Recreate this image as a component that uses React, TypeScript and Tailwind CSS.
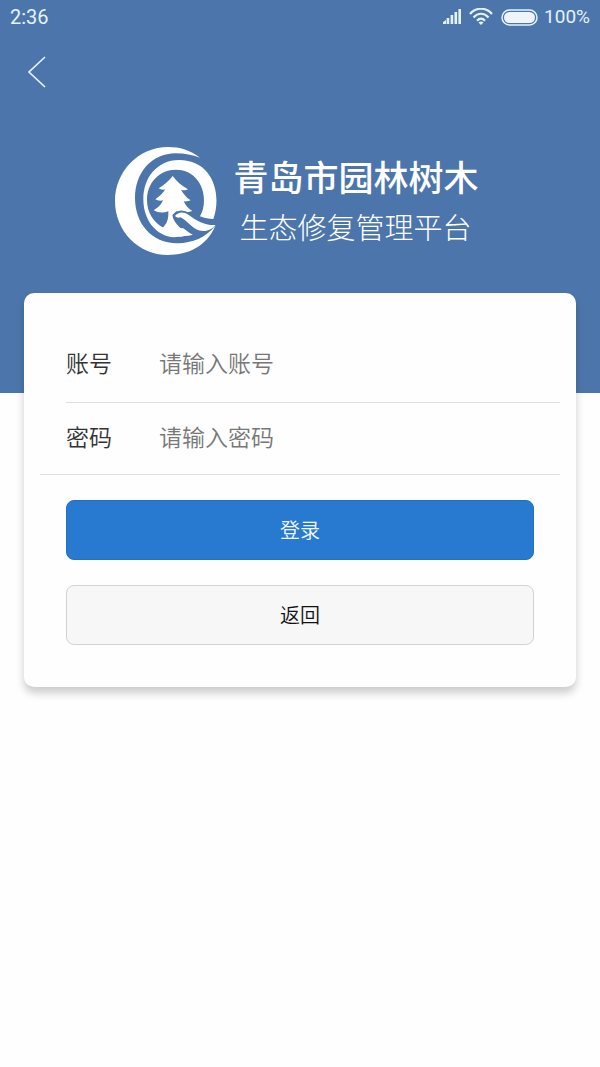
import { useState } from "react";

function SignalIcon() {
  return (
    <svg viewBox="0 0 18 16" className="h-4 w-[18px] fill-[#e4f2fb]" aria-hidden="true">
      <path d="M0 15v-2l3-2v4z" />
      <rect x="3.600" y="9" width="2.600" height="6" />
      <rect x="7.600" y="6" width="2.600" height="9" />
      <rect x="11.500" y="3" width="2.600" height="12" />
      <rect x="15.400" y="0" width="2.600" height="15" />
    </svg>
  );
}

function WifiIcon() {
  return (
    <svg viewBox="0 0 24 18" className="h-[18px] w-6 fill-none stroke-[#e4f2fb] stroke-[2.2]" aria-hidden="true">
      <path d="M1 6C7-1 17-1 23 6" />
      <path d="M4.500 9.500C9 4.500 15 4.500 19.500 9.500" />
      <path d="M8 12.700C10.500 10 13.500 10 16 12.700" />
      <path d="M9.500 14.500Q12 12.500 14.500 14.500L12 17z" className="fill-[#e4f2fb] stroke-none" />
    </svg>
  );
}

function BatteryIcon() {
  return (
    <svg viewBox="0 0 37 17" className="h-[17px] w-[37px]" aria-hidden="true">
      <rect x="1" y="1" width="35" height="15" rx="7.500" className="fill-none stroke-[#e4f2fb] stroke-[1.5]" />
      <rect x="3" y="3" width="31" height="11" rx="5.500" className="fill-[#eef4f9]" />
    </svg>
  );
}

function Logo() {
  return (
    <svg viewBox="30 33 306 330" className="h-[110px] w-[102px] shrink-0 fill-white" role="img" aria-label="青岛市园林树木">
      <path d="M285 68C255 45 225 36 190 36C100 36 30 110 30 198C30 288 100 360 188 360C250 360 304 335 332 271C302 309 262 324 218 325C140 326 90 265 90 190C90 112 140 56 212 55C240 55 262 60 285 68Z" />
      <path d="M325 252C352 175 322 75 222 75C155 75 115 130 115 192C115 255 153 304 208 307L262 300L235 280L175 278C145 262 126 232 126 195C126 143 163 104 213 104C262 104 297 144 297 195C297 215 293 230 285 244C299 250 311 252 325 252Z" />
      <path d="M203 123C192 137 177 150 161 160Q170 166 181 163C174 175 163 185 151 193Q162 200 174 196C168 210 158 219 146 226Q166 238 190 229C191 248 188 266 172 279C188 292 207 302 225 305L264 299C236 290 206 268 202 240L214 229Q240 235 262 228C250 221 241 211 236 199Q249 200 257 196C244 188 235 176 228 164Q240 168 249 163C231 153 214 139 203 123Z" />
      <path d="M210 243C220 230 235 229 250 239C272 256 290 267 316 268L298 288C264 290 249 258 224 248C219 246 214 246 210 243Z" className="stroke-[#4c76ab] stroke-[12] [stroke-linejoin:round]" />
      <path d="M210 243C220 230 235 229 250 239C274 257 297 271 331 270C323 281 309 289 294 288C264 288 249 257 226 247C220 249 215 248 210 243Z" />
    </svg>
  );
}

export default function App() {
  const [account, setAccount] = useState("");
  const [password, setPassword] = useState("");

  return (
    <div className="min-h-screen bg-[#fefefe] font-['Noto_Sans_CJK_SC',sans-serif] text-[#333]">
      <header className="h-[393px] bg-[#4c76ab]">
        <div className="flex h-[34px] items-center justify-between px-2.5 font-[Roboto,sans-serif] text-[20px] text-[#e4f2fb]">
          <span>2:36</span>
          <div className="flex items-center gap-2">
            <SignalIcon />
            <WifiIcon />
            <BatteryIcon />
            <span className="-ml-0.5 text-[19px]">100%</span>
          </div>
        </div>
        <button type="button" aria-label="返回上一页" className="flex h-[76px] w-[74px] items-center justify-center">
          <svg viewBox="0 0 18 32" className="h-8 w-[18px] fill-none stroke-[#e4f2fb] stroke-[1.7]" aria-hidden="true">
            <path d="M17 1L1 16L17 31" />
          </svg>
        </button>
        <div className="mt-9 flex items-center justify-center gap-4 pr-1.5">
          <Logo />
          <h1 className="text-white">
            <span className="block text-[35px] leading-[50px] font-medium">青岛市园林树木</span>
            <span className="block pl-1.5 text-[29px] leading-[50px] font-light">生态修复管理平台</span>
          </h1>
        </div>
      </header>

      <main className="px-6">
        <form
          onSubmit={(event) => event.preventDefault()}
          className="-mt-[100px] rounded-[10px] bg-[#fefefe] px-4 pt-[34px] pb-[42px] shadow-[0_6px_8px_rgba(0,0,0,0.2)]"
        >
          <div className="ml-[26px] flex h-[76px] items-center border-b border-[#dedede] pb-1 text-[23px]">
            <label htmlFor="account" className="w-[93px] shrink-0 font-[350]">账号</label>
            <input
              id="account"
              type="text"
              value={account}
              onChange={(event) => setAccount(event.target.value)}
              placeholder="请输入账号"
              className="min-w-0 flex-1 bg-transparent font-[350] outline-none placeholder:text-[#777]"
            />
          </div>
          <div className="flex h-[72px] items-center border-b border-[#dedede] pb-1 pl-[26px] text-[23px]">
            <label htmlFor="password" className="w-[93px] shrink-0 font-[350]">密码</label>
            <input
              id="password"
              type="password"
              value={password}
              onChange={(event) => setPassword(event.target.value)}
              placeholder="请输入密码"
              className="min-w-0 flex-1 bg-transparent font-[350] outline-none placeholder:text-[#777]"
            />
          </div>
          <div className="mt-[25px] flex flex-col gap-[25px] px-[26px] text-[20px] font-[350]">
            <button type="submit" className="h-[60px] rounded-lg border border-[#2670bd] bg-[#2879d0] text-[#f0f8ff]">
              登录
            </button>
            <button type="button" className="h-[60px] rounded-lg border border-[#d2d2d2] bg-[#f7f7f7] text-[#111]">
              返回
            </button>
          </div>
        </form>
      </main>
    </div>
  );
}
